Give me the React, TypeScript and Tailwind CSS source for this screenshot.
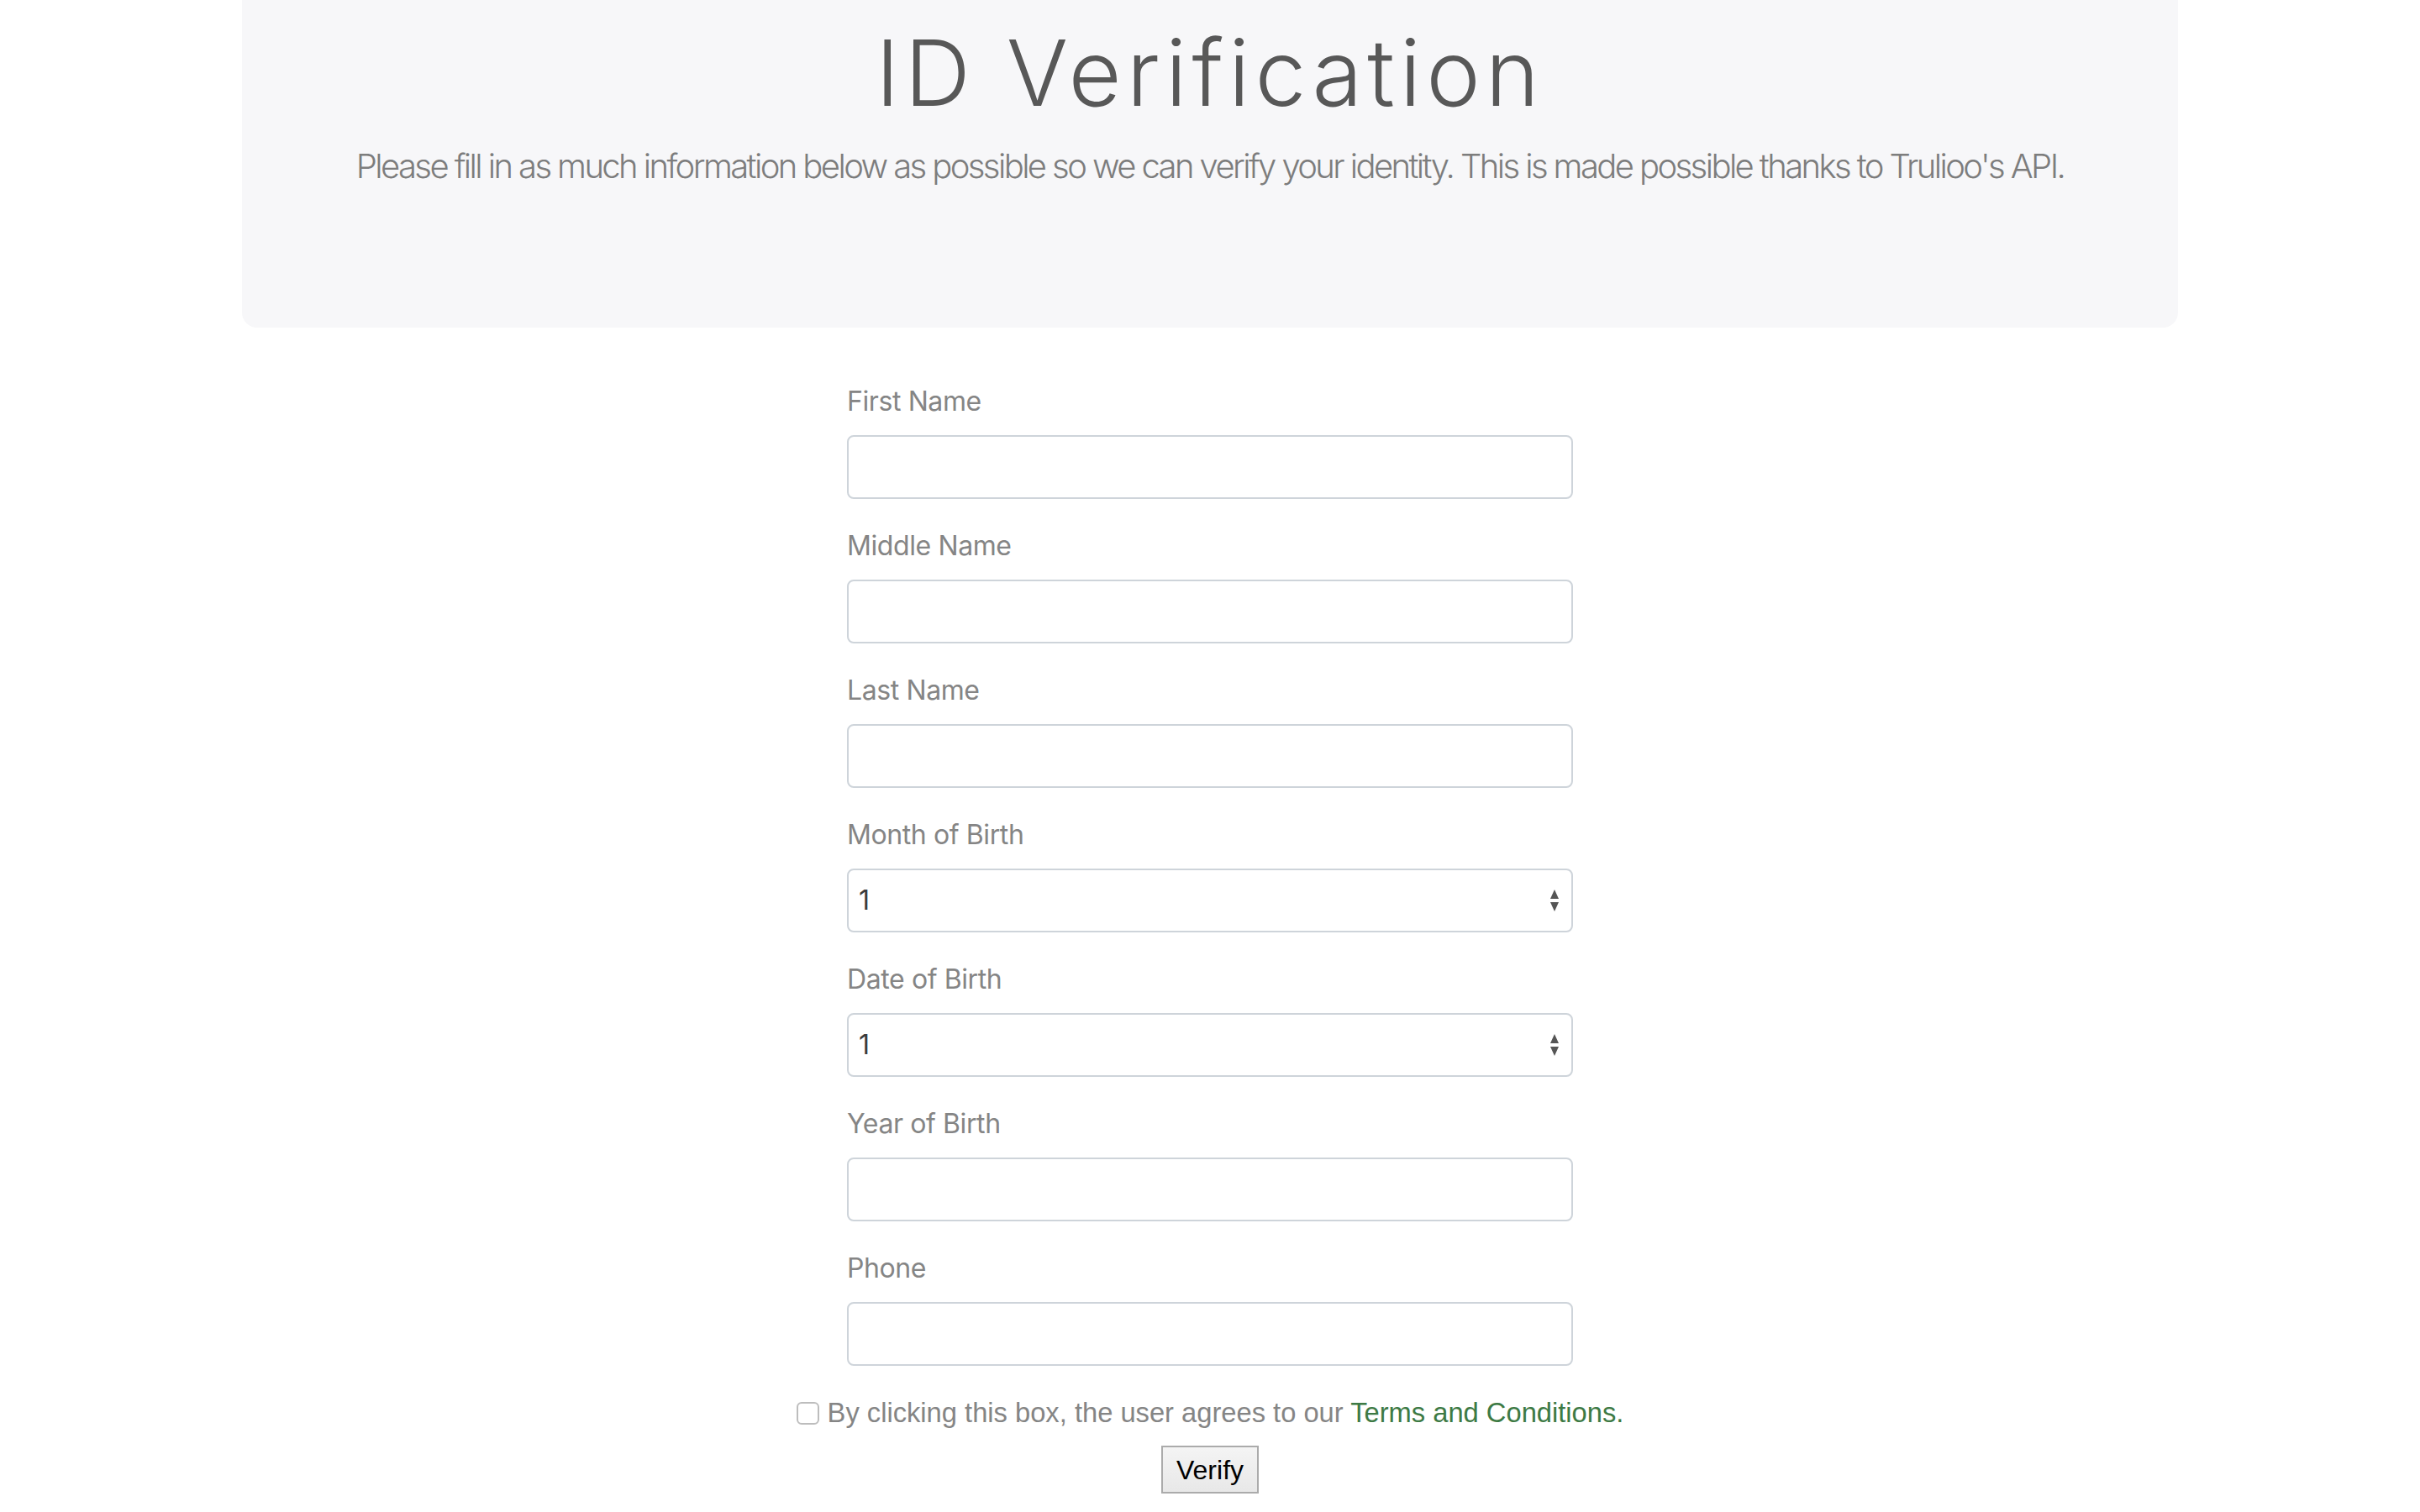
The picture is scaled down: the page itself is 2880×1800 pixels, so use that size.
import React from "react";

const Arrows = () => (
  <svg width="12" height="30" viewBox="0 0 12 30" className="pointer-events-none absolute right-[16px] top-1/2 -translate-y-1/2">
    <path d="M6 2 L11 13 L1 13 Z" fill="#555" />
    <path d="M1 17 L11 17 L6 28 Z" fill="#555" />
  </svg>
);

const Field = ({ label, select }: { label: string; select?: boolean }) => (
  <div className="mb-[32px] flex flex-col">
    <label
      className="mb-[16px] h-[48px] text-[32px] leading-[48px] tracking-[-0.4px] text-[#858585]"
      style={{ fontFamily: "Inter, 'Liberation Sans', sans-serif" }}
    >
      {label}
    </label>
    {select ? (
      <div className="relative h-[76px]">
        <select
          className="h-[76px] w-full appearance-none rounded-[8px] border-2 border-[#ced4da] bg-white pl-[12px] text-[32px] text-[#3b3b3b] outline-none"
          style={{ fontFamily: "Inter, 'Liberation Sans', sans-serif" }}
          defaultValue="1"
        >
          <option value="1">1</option>
        </select>
        <Arrows />
      </div>
    ) : (
      <input
        type="text"
        className="h-[76px] w-full rounded-[8px] border-2 border-[#ced4da] bg-white px-[18px] text-[32px] outline-none"
      />
    )}
  </div>
);

export default function App() {
  return (
    <div className="min-h-[1800px] w-full bg-white">
      <div className="mx-auto w-[2304px] rounded-b-[18px] bg-[#f7f7f9] pt-[21px] pb-[162px] text-center">
        <h1
          className="h-[131px] text-[109px] font-light leading-[131px] tracking-[6px] text-[#585858]"
          style={{ fontFamily: "Inter, 'Open Sans', sans-serif" }}
        >
          ID Verification
        </h1>
        <p
          className="mt-[16px] h-[60px] whitespace-nowrap text-[40px] font-light leading-[60px] tracking-[-2.6px] text-[#7d7d7d]"
          style={{ fontFamily: "Inter, 'Liberation Sans', sans-serif" }}
        >
          Please fill in as much information below as possible so we can verify your identity. This is made possible thanks to Trulioo's API.
        </p>
      </div>

      <form className="mx-auto mt-[64px] w-[864px]">
        <Field label="First Name" />
        <Field label="Middle Name" />
        <Field label="Last Name" />
        <Field label="Month of Birth" select />
        <Field label="Date of Birth" select />
        <Field label="Year of Birth" />
        <Field label="Phone" />
      </form>

      <div
        className="flex h-[48px] items-center justify-center text-[32.7px] leading-[48px] text-[#858585]"
        style={{ fontFamily: "'Liberation Sans', Arial, sans-serif" }}
      >
        <input
          type="checkbox"
          className="mr-[10px] h-[27px] w-[27px] appearance-none rounded-[6px] border-2 border-[#bdbdbd] bg-white"
        />
        <span>
          By clicking this box, the user agrees to our{" "}
          <a className="text-[#3d7a44]">Terms and Conditions.</a>
        </span>
      </div>

      <div className="mt-[15px] flex justify-center">
        <button
          type="button"
          className="h-[57px] w-[116px] border-2 border-[#ababab] bg-gradient-to-b from-[#f4f4f4] to-[#e8e8e8] text-[32px] text-black"
          style={{ fontFamily: "'Liberation Sans', Arial, sans-serif" }}
        >
          Verify
        </button>
      </div>
    </div>
  );
}
